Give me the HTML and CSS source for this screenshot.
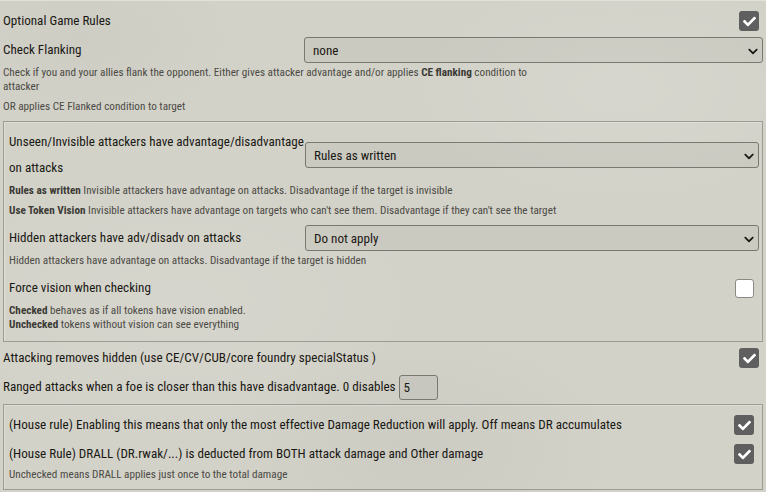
FILE: index.html
```html
<!DOCTYPE html>
<html>
<head>
<meta charset="utf-8">
<link rel="stylesheet" href="styles.css">
</head>
<body>
<form class="sheet">
  <div class="form-group">
    <label class="lbl grow">Optional Game Rules</label>
    <span class="check on"><svg viewBox="0 0 512 512"><path d="M173.9 439.4l-166.4-166.4c-10-10-10-26.2 0-36.2l36.2-36.2c10-10 26.2-10 36.2 0L192 312.7 432.1 72.6c10-10 26.2-10 36.2 0l36.2 36.2c10 10 10 26.2 0 36.2l-294.4 294.4c-10 10-26.2 10-36.2 0z"/></svg></span>
  </div>
  <div class="form-group">
    <label class="lbl w-top">Check Flanking</label>
    <div class="select w-top-f"><span>none</span><svg class="chev" viewBox="0 0 448 512"><path d="M207 381.5L12.7 187.1c-9.4-9.4-9.4-24.6 0-33.9l22.7-22.7c9.4-9.4 24.5-9.4 33.9 0L224 284.5l154.7-154c9.4-9.3 24.5-9.3 33.9 0l22.7 22.7c9.4 9.4 9.4 24.6 0 33.9L241 381.5c-9.4 9.4-24.6 9.4-34 0z"/></svg></div>
  </div>
  <div class="hint">
    <p class="narrow">Check if you and your allies flank the opponent. Either gives attacker advantage and/or applies <b>CE flanking</b> condition to attacker</p>
    <p>OR applies CE Flanked condition to target</p>
  </div>

  <fieldset class="fs">
    <div class="form-group">
      <label class="lbl w-in">Unseen/Invisible attackers have advantage/disadvantage on attacks</label>
      <div class="select w-in-f"><span>Rules as written</span><svg class="chev" viewBox="0 0 448 512"><path d="M207 381.5L12.7 187.1c-9.4-9.4-9.4-24.6 0-33.9l22.7-22.7c9.4-9.4 24.5-9.4 33.9 0L224 284.5l154.7-154c9.4-9.3 24.5-9.3 33.9 0l22.7 22.7c9.4 9.4 9.4 24.6 0 33.9L241 381.5c-9.4 9.4-24.6 9.4-34 0z"/></svg></div>
    </div>
    <div class="hint">
      <p><b>Rules as written</b> Invisible attackers have advantage on attacks. Disadvantage if the target is invisible</p>
      <p><b>Use Token Vision</b> Invisible attackers have advantage on targets who can't see them. Disadvantage if they can't see the target</p>
    </div>
    <div class="form-group">
      <label class="lbl w-in">Hidden attackers have adv/disadv on attacks</label>
      <div class="select w-in-f"><span>Do not apply</span><svg class="chev" viewBox="0 0 448 512"><path d="M207 381.5L12.7 187.1c-9.4-9.4-9.4-24.6 0-33.9l22.7-22.7c9.4-9.4 24.5-9.4 33.9 0L224 284.5l154.7-154c9.4-9.3 24.5-9.3 33.9 0l22.7 22.7c9.4 9.4 9.4 24.6 0 33.9L241 381.5c-9.4 9.4-24.6 9.4-34 0z"/></svg></div>
    </div>
    <div class="hint">
      <p>Hidden attackers have advantage on attacks. Disadvantage if the target is hidden</p>
    </div>
    <div class="form-group">
      <label class="lbl grow">Force vision when checking</label>
      <span class="check off"></span>
    </div>
    <div class="hint tight">
      <p><b>Checked</b> behaves as if all tokens have vision enabled.<br><b>Unchecked</b> tokens without vision can see everything</p>
    </div>
  </fieldset>

  <div class="form-group">
    <label class="lbl grow">Attacking removes hidden (use CE/CV/CUB/core foundry specialStatus )</label>
    <span class="check on"><svg viewBox="0 0 512 512"><path d="M173.9 439.4l-166.4-166.4c-10-10-10-26.2 0-36.2l36.2-36.2c10-10 26.2-10 36.2 0L192 312.7 432.1 72.6c10-10 26.2-10 36.2 0l36.2 36.2c10 10 10 26.2 0 36.2l-294.4 294.4c-10 10-26.2 10-36.2 0z"/></svg></span>
  </div>
  <div class="form-group">
    <label class="lbl">Ranged attacks when a foe is closer than this have disadvantage. 0 disables</label>
    <span class="num">5</span>
  </div>

  <fieldset class="fs fs2">
    <div class="form-group">
      <label class="lbl grow">(House rule) Enabling this means that only the most effective Damage Reduction will apply. Off means DR accumulates</label>
      <span class="check on"><svg viewBox="0 0 512 512"><path d="M173.9 439.4l-166.4-166.4c-10-10-10-26.2 0-36.2l36.2-36.2c10-10 26.2-10 36.2 0L192 312.7 432.1 72.6c10-10 26.2-10 36.2 0l36.2 36.2c10 10 10 26.2 0 36.2l-294.4 294.4c-10 10-26.2 10-36.2 0z"/></svg></span>
    </div>
    <div class="form-group">
      <label class="lbl grow">(House Rule) DRALL (DR.rwak/...) is deducted from BOTH attack damage and Other damage</label>
      <span class="check on"><svg viewBox="0 0 512 512"><path d="M173.9 439.4l-166.4-166.4c-10-10-10-26.2 0-36.2l36.2-36.2c10-10 26.2-10 36.2 0L192 312.7 432.1 72.6c10-10 26.2-10 36.2 0l36.2 36.2c10 10 10 26.2 0 36.2l-294.4 294.4c-10 10-26.2 10-36.2 0z"/></svg></span>
    </div>
    <div class="hint last">
      <p>Unchecked means DRALL applies just once to the total damage</p>
    </div>
  </fieldset>
</form>
</body>
</html>
```
FILE: styles.css
```css
html, body {
  margin: 0;
  height: 100%;
}
body {
  background-color: #d3d2c9;
  background-image:
    radial-gradient(ellipse 220px 120px at 620px 90px, rgba(255,255,255,0.10), transparent),
    radial-gradient(ellipse 260px 140px at 180px 300px, rgba(255,255,255,0.08), transparent),
    radial-gradient(ellipse 200px 120px at 420px 450px, rgba(0,0,0,0.03), transparent),
    radial-gradient(ellipse 160px 90px at 80px 40px, rgba(0,0,0,0.025), transparent);
  border-top: 1px solid #e1e0d9;
  box-sizing: border-box;
  font-family: Roboto, "Liberation Sans", sans-serif;
  font-stretch: condensed;
  color: #191813;
  overflow: hidden;
}
.sheet {
  padding: 7px 3px 0;
}
.form-group {
  display: flex;
  align-items: center;
  margin-bottom: 3px;
}
.lbl {
  font-size: 13.1px;
  line-height: 26px;
}
.grow { flex: 1; }
.w-top { width: 301px; flex: none; }
.w-top-f { width: 459px; }
.w-in { width: 296px; flex: none; }
.w-in-f { width: 454px; }

.select {
  position: relative;
  box-sizing: border-box;
  height: 26px;
  border: 1px solid #7a7971;
  border-radius: 3px;
  background: rgba(0,0,0,0.035);
  display: flex;
  align-items: center;
  padding-left: 8px;
  font-size: 13.1px;
}
.chev {
  position: absolute;
  right: 4px;
  top: 8px;
  width: 10px;
  height: 11px;
  fill: #191813;
}
.check {
  width: 20px;
  height: 20px;
  box-sizing: border-box;
  border-radius: 3px;
  margin-right: 4px;
  display: flex;
  align-items: center;
  justify-content: center;
}
.check.on {
  background: #5f5f5f;
}
.check.on svg {
  width: 13px;
  height: 13px;
  fill: #fff;
}
.check.off {
  width: 19px;
  height: 19px;
  background: #fff;
  border: 1px solid #8a8982;
  margin-right: 5px;
}
.fs .check.on { margin-right: 5px; }

.num {
  box-sizing: border-box;
  width: 39px;
  height: 25px;
  margin-left: 3px;
  border: 1px solid #7a7971;
  border-radius: 3px;
  background: rgba(0,0,0,0.035);
  padding-left: 4px;
  font-size: 13.1px;
  line-height: 23px;
}

.hint {
  margin: 0 0 7px;
  color: #4b4a44;
  font-size: 11.2px;
  line-height: 14px;
}
.hint p { margin: 0; }
.hint p + p { margin-top: 6px; }
.hint b { color: #3b3a35; font-weight: 700; }
.hint.tight { line-height: 13.5px; }
.hint .narrow { max-width: 545px; }

.fs {
  margin: 0 0 3px;
  border: 1px solid #9d9c94;
  box-shadow: inset 1px 1px 0 rgba(255,255,255,0.25);
  padding: 7px 3px 3px 5px;
}
.fs2 {
  margin-top: 4px;
  padding-bottom: 0;
}
.hint.last { margin-top: -2px; margin-bottom: 7px; }
```
